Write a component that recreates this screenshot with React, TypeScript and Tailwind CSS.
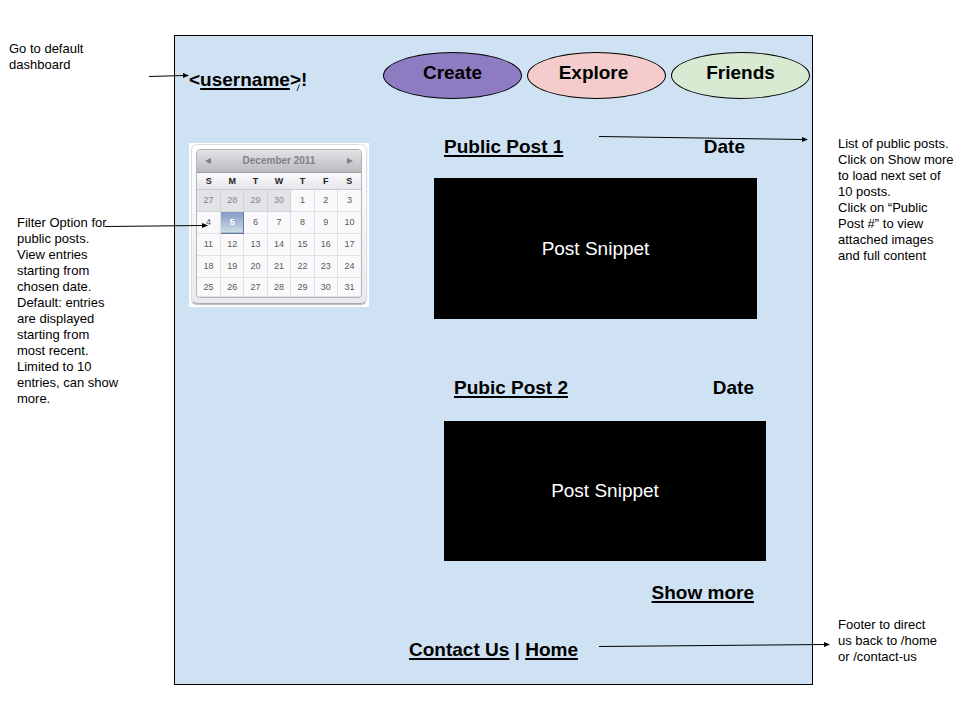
import React from "react";

const WEEKDAYS = ["S", "M", "T", "W", "T", "F", "S"];

const WEEKS = [
  [27, 28, 29, 30, 1, 2, 3],
  [4, 5, 6, 7, 8, 9, 10],
  [11, 12, 13, 14, 15, 16, 17],
  [18, 19, 20, 21, 22, 23, 24],
  [25, 26, 27, 28, 29, 30, 31],
];

const LINK = "underline decoration-2 underline-offset-2";

type ArrowProps = {
  className: string;
  width: number;
  from: number;
  to: number;
};

// Annotation arrow pointing right; `from` and `to` are the heights of its ends.
function Arrow({ className, width, from, to }: ArrowProps) {
  return (
    <svg
      className={`pointer-events-none absolute ${className}`}
      width={width}
      height={12}
      viewBox={`0 0 ${width} 12`}
      aria-hidden="true"
    >
      <line x1={0} y1={from} x2={width - 5} y2={to} stroke="#000" strokeWidth={1} />
      <path d={`M${width - 6} ${to - 2.5}L${width} ${to}L${width - 6} ${to + 2.5}Z`} fill="#000" />
    </svg>
  );
}

function Calendar() {
  return (
    <div className="mt-2 w-[180px] shrink-0 bg-white px-[2px] pt-px pb-[3px]">
      <div className="rounded-[6px] border border-[#dcdde0] border-b-[#a9abb0] bg-gradient-to-b from-white to-[#e9eaec] px-[4px] pt-[4px] pb-[5px] shadow-[0_1px_1px_#b9bbc0]">
        <div className="overflow-hidden rounded-[4px] border border-[#b4b5ba] bg-[#f9f9fb]">
          <div className="flex h-[23px] items-center justify-between border-b border-[#9b9ca0] bg-gradient-to-b from-[#e4e4e7] to-[#b9babe] px-[8px]">
            <button type="button" aria-label="Previous month">
              <svg width="6" height="6" viewBox="0 0 6 6">
                <path d="M6 0V6L0 3Z" fill="#7f8084" />
              </svg>
            </button>
            <span className="text-[10px] leading-[12px] font-bold text-[#808185]">December 2011</span>
            <button type="button" aria-label="Next month">
              <svg width="6" height="6" viewBox="0 0 6 6">
                <path d="M0 0V6L6 3Z" fill="#7f8084" />
              </svg>
            </button>
          </div>
          <table className="w-full table-fixed border-collapse text-center text-[9px] leading-[12px]">
            <thead>
              <tr className="h-4 bg-gradient-to-b from-[#fafafc] to-[#e6e6ec] text-[#222]">
                {WEEKDAYS.map((day, i) => (
                  <th key={i} scope="col" className="border-b border-[#c9cacf] p-0 font-bold">
                    {day}
                  </th>
                ))}
              </tr>
            </thead>
            <tbody>
              {WEEKS.map((week, row) => (
                <tr key={row} className="h-[22px] last:h-[19px]">
                  {week.map((day, col) => {
                    const previous = row === 0 && day > 20;
                    const selected = row === 1 && day === 5;
                    const tone = selected
                      ? "border border-[#5f7ba3] bg-gradient-to-b from-[#8199c4] to-[#cfdde6] font-bold text-white"
                      : previous
                        ? "border-r border-b border-[#d2d3d7] bg-[#e2e3e6] text-[#85868a]"
                        : "border-r border-b border-[#dfe0e4] text-[#58595c]";
                    return (
                      <td key={col} className={`p-0 last:border-r-0 ${tone}`}>
                        <button type="button">{day}</button>
                      </td>
                    );
                  })}
                </tr>
              ))}
            </tbody>
          </table>
        </div>
      </div>
    </div>
  );
}

function PostHeading({ title }: { title: string }) {
  return (
    <div className="flex justify-between pr-3 pl-[10px] font-bold">
      <a href="#post" className={LINK}>
        {title}
      </a>
      <span>Date</span>
    </div>
  );
}

const NAV = "h-[47px] w-[139px] rounded-[50%] border border-black pb-[5px] font-bold";

export default function App() {
  return (
    <div className="flex min-h-screen bg-white font-['Liberation_Sans',Arial,sans-serif] text-[19px] leading-6 text-black">
      <aside className="relative z-10 w-[174px] shrink-0 text-[13px] leading-4">
        <p className="pt-[41px] pl-[9px]">
          Go to default
          <br />
          dashboard
        </p>
        <p className="pt-[142px] pl-[17px]">
          Filter Option for
          <br />
          public posts.
          <br />
          View entries
          <br />
          starting from
          <br />
          chosen date.
          <br />
          Default: entries
          <br />
          are displayed
          <br />
          starting from
          <br />
          most recent.
          <br />
          Limited to 10
          <br />
          entries, can show
          <br />
          more.
        </p>
        <Arrow className="top-[70px] left-[149px]" width={40} from={6.5} to={5.5} />
        <Arrow className="top-[220px] left-[105px]" width={103} from={6.5} to={5.5} />
      </aside>

      <main className="my-[35px] min-w-0 flex-1 self-start border border-black bg-[#cfe2f3]">
        <header className="flex items-start justify-between pt-4 pr-[2px] pl-[14px]">
          <h1 className="relative pt-4 font-bold">
            &lt;
            <a href="#dashboard" className={LINK}>
              username
            </a>
            &gt;!
            <svg className="absolute top-[32px] left-[107px]" width="5" height="8" viewBox="0 0 5 8" aria-hidden="true">
              <path d="M3.5 0.5L1 7" stroke="#222" strokeWidth="1" />
            </svg>
          </h1>
          <nav className="flex gap-[5px]">
            <button type="button" className={`${NAV} bg-[#8e7cc3]`}>
              Create
            </button>
            <button type="button" className={`${NAV} bg-[#f4cccc] pr-[6px]`}>
              Explore
            </button>
            <button type="button" className={`${NAV} bg-[#d9ead3]`}>
              Friends
            </button>
          </nav>
        </header>

        <div className="mt-9 flex items-start justify-between pr-[46px] pl-[14px]">
          <Calendar />
          <div className="w-[332px]">
            <article className="mr-[9px]">
              <PostHeading title="Public Post 1" />
              <div className="mt-[19px] flex h-[141px] items-center justify-center bg-black text-white">
                Post Snippet
              </div>
            </article>
            <article className="mt-[57px] ml-[10px]">
              <PostHeading title="Pubic Post 2" />
              <div className="mt-[21px] flex h-[140px] items-center justify-center bg-black text-white">
                Post Snippet
              </div>
            </article>
            <div className="mt-5 flex justify-end pr-3 font-bold">
              <button type="button" className={LINK}>
                Show more
              </button>
            </div>
          </div>
        </div>

        <footer className="mt-[33px] pb-[22px] text-center font-bold">
          <a href="#contact-us" className={LINK}>
            Contact Us
          </a>
          {" | "}
          <a href="#home" className={LINK}>
            Home
          </a>
        </footer>
      </main>

      <aside className="relative z-10 w-[147px] shrink-0 pl-[25px] text-[13px] leading-4 whitespace-nowrap">
        <p className="pt-[136px]">
          List of public posts.
          <br />
          Click on Show more
          <br />
          to load next set of
          <br />
          10 posts.
          <br />
          Click on “Public
          <br />
          Post #” to view
          <br />
          attached images
          <br />
          and full content
        </p>
        <p className="pt-[353px]">
          Footer to direct
          <br />
          us back to /home
          <br />
          or /contact-us
        </p>
        <Arrow className="top-[132px] left-[-214px]" width={209} from={4.5} to={7.5} />
        <Arrow className="top-[640px] left-[-214px]" width={231} from={6.5} to={4.5} />
      </aside>
    </div>
  );
}
